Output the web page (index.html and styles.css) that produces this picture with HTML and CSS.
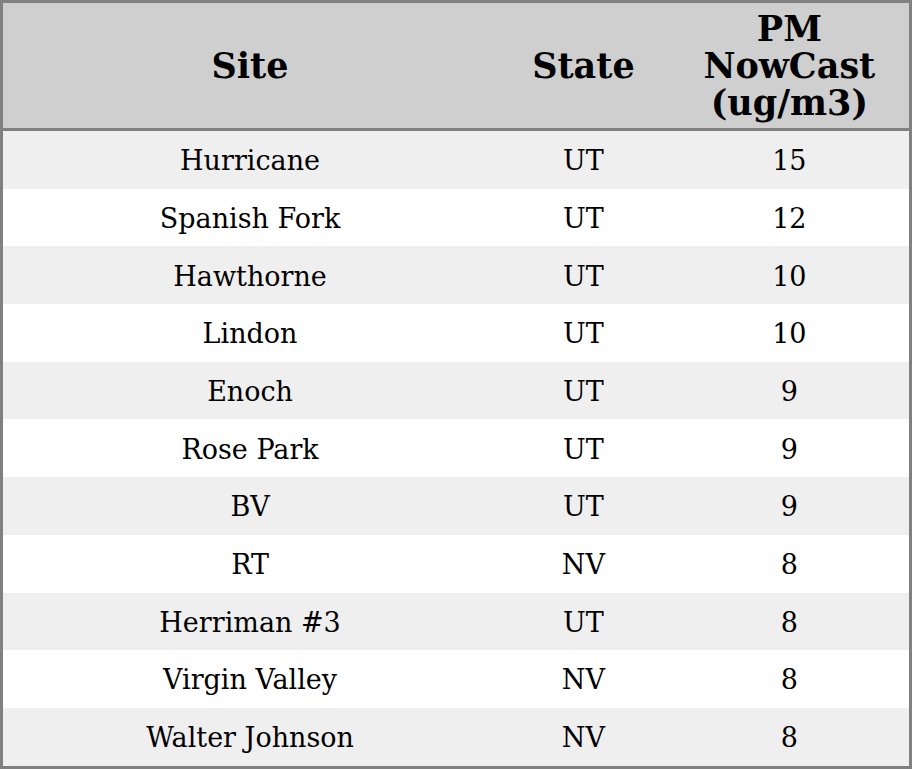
FILE: index.html
```html
<!DOCTYPE html>
<html>
<head>
<meta charset="utf-8">
<link rel="stylesheet" href="styles.css">
</head>
<body>
<table class="aq">
  <colgroup>
    <col class="c-site">
    <col class="c-state">
    <col class="c-pm">
  </colgroup>
  <thead>
    <tr><th>Site</th><th>State</th><th>PM<br>NowCast<br>(ug/m3)</th></tr>
  </thead>
  <tbody>
    <tr><td>Hurricane</td><td>UT</td><td>15</td></tr>
    <tr><td>Spanish Fork</td><td>UT</td><td>12</td></tr>
    <tr><td>Hawthorne</td><td>UT</td><td>10</td></tr>
    <tr><td>Lindon</td><td>UT</td><td>10</td></tr>
    <tr><td>Enoch</td><td>UT</td><td>9</td></tr>
    <tr><td>Rose Park</td><td>UT</td><td>9</td></tr>
    <tr><td>BV</td><td>UT</td><td>9</td></tr>
    <tr><td>RT</td><td>NV</td><td>8</td></tr>
    <tr><td>Herriman #3</td><td>UT</td><td>8</td></tr>
    <tr><td>Virgin Valley</td><td>NV</td><td>8</td></tr>
    <tr><td>Walter Johnson</td><td>NV</td><td>8</td></tr>
  </tbody>
</table>
</body>
</html>
```
FILE: styles.css
```css
html, body {
  margin: 0;
  padding: 0;
  background: #ffffff;
}
.aq {
  width: 912px;
  border-collapse: collapse;
  border: 3px solid #808080;
  font-family: "DejaVu Serif", serif;
  color: #000;
  table-layout: fixed;
}
.c-site { width: 494px; }
.c-state { width: 172px; }
.c-pm { width: 240px; }
.aq th {
  background: #cfcfcf;
  font-size: 35px;
  font-weight: bold;
  line-height: 37px;
  height: 111px;
  padding: 7px 0 7px;
  text-align: center;
  vertical-align: middle;
  border-bottom: 3px solid #808080;
}
.aq td {
  font-size: 27px;
  line-height: 31px;
  padding: 14.2px 0 12.5px;
  text-align: center;
  vertical-align: middle;
}
.aq tbody tr:nth-child(odd) td { background: #efefef; }
.aq tbody tr:nth-child(even) td { background: #ffffff; }
```
